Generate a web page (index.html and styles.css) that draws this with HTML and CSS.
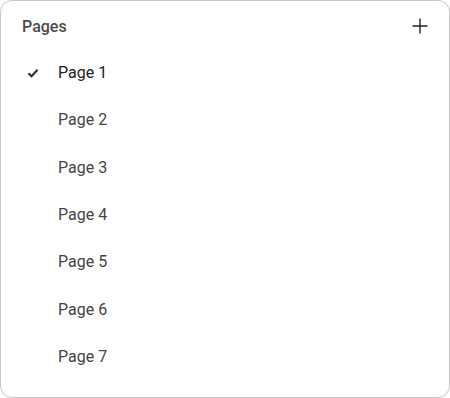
FILE: index.html
```html
<!DOCTYPE html>
<html lang="en">
<head>
  <meta charset="UTF-8">
  <title>Pages</title>
  <link rel="stylesheet" href="styles.css">
</head>
<body>
  <div class="panel">
    <div class="panel-head">
      <span class="title">Pages</span>
      <svg class="add" width="16" height="16" viewBox="0 0 16 16">
        <path d="M8 0.5v15M0.5 8h15" stroke="#222" stroke-width="1.4" fill="none"/>
      </svg>
    </div>
    <ul class="pages">
      <li class="page current">
        <svg class="check" width="12" height="10" viewBox="0 0 12 10">
          <path d="M1.5 5.2l3 3 6-6.4" stroke="#2a2a2a" stroke-width="2" fill="none"/>
        </svg>
        <span>Page 1</span>
      </li>
      <li class="page"><span>Page 2</span></li>
      <li class="page"><span>Page 3</span></li>
      <li class="page"><span>Page 4</span></li>
      <li class="page"><span>Page 5</span></li>
      <li class="page"><span>Page 6</span></li>
      <li class="page"><span>Page 7</span></li>
    </ul>
  </div>
</body>
</html>
```

FILE: styles.css
```css
* {
  box-sizing: border-box;
}

body {
  margin: 0;
  font-family: Roboto, "Liberation Sans", sans-serif;
  background: #fff;
}

.panel {
  width: 450px;
  height: 398px;
  border: 1px solid #c6c6c6;
  border-radius: 12px;
  background: #fff;
}

.panel-head {
  height: 48px;
  display: flex;
  align-items: center;
  justify-content: space-between;
  padding: 2px 21px 0 21px;
}

.title {
  font-size: 16px;
  font-weight: 500;
  color: #4a4a4a;
}

.pages {
  list-style: none;
  margin: 0;
  padding: 0;
}

.page {
  height: 47.3px;
  display: flex;
  align-items: center;
  padding-left: 57px;
  position: relative;
  font-size: 16px;
  color: #444;
}

.page.current {
  color: #222;
}

.check {
  position: absolute;
  left: 26px;
  top: 19px;
}
```
